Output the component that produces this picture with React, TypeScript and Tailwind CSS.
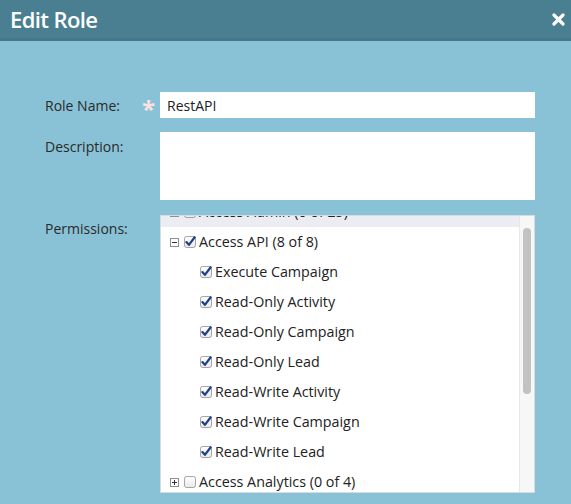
import React from "react";

const font = { fontFamily: '"Open Sans", "DejaVu Sans", sans-serif' };

function Checkbox({ checked }: { checked: boolean }) {
  return (
    <svg width="12" height="12" viewBox="0 0 13 13" className="shrink-0">
      <defs>
        <linearGradient id="cbg" x1="0" y1="0" x2="0" y2="1">
          <stop offset="0" stopColor="#ffffff" />
          <stop offset="1" stopColor="#e9e9e9" />
        </linearGradient>
      </defs>
      <rect x="0.5" y="0.5" width="12" height="12" rx="2.5" fill="url(#cbg)" stroke="#9a9a9a" />
      {checked && (
        <path
          d="M2.6 6.6 L5.3 9.6 L11.6 1.4"
          fill="none"
          stroke="#1f3f8a"
          strokeWidth="2.4"
          strokeLinecap="round"
          strokeLinejoin="round"
        />
      )}
    </svg>
  );
}

function Expander({ open }: { open: boolean }) {
  return (
    <svg width="9" height="9" viewBox="0 0 9 9" className="shrink-0">
      <rect x="0.5" y="0.5" width="8" height="8" fill="#fff" stroke="#8f8f8f" />
      <path d="M2 4.5 H7" stroke="#333" strokeWidth="1" />
      {!open && <path d="M4.5 2 V7" stroke="#333" strokeWidth="1" />}
    </svg>
  );
}

function GroupRow({ label, open, checked, shaded }: { label: string; open: boolean; checked: boolean; shaded?: boolean }) {
  return (
    <div className={`h-[30px] flex items-center pl-[9px] ${shaded ? "bg-[#ecedf3]" : ""}`}>
      <Expander open={open} />
      <span className="w-[5px]" />
      <Checkbox checked={checked} />
      <span className="ml-[3px] text-[14.3px] text-[#222]">{label}</span>
    </div>
  );
}

function ChildRow({ label }: { label: string }) {
  return (
    <div className="h-[30px] flex items-center pl-[39px]">
      <Checkbox checked />
      <span className="ml-[3px] text-[14.3px] text-[#222]">{label}</span>
    </div>
  );
}

const children = [
  "Execute Campaign",
  "Read-Only Activity",
  "Read-Only Campaign",
  "Read-Only Lead",
  "Read-Write Activity",
  "Read-Write Campaign",
  "Read-Write Lead",
];

export default function App() {
  return (
    <div className="w-[571px] h-[504px] bg-[#89c2d6] overflow-hidden" style={font}>
      {/* Header */}
      <div className="h-[41px] bg-[#4a7f92] border-b-[3px] border-[#447789] flex items-center justify-between pl-[10px] pr-[6px]">
        <span className="text-white text-[22px] font-semibold tracking-[-0.6px] leading-none">Edit Role</span>
        <svg width="13" height="13" viewBox="0 0 13 13">
          <path d="M2 2 L11 11 M11 2 L2 11" stroke="#fff" strokeWidth="3.2" strokeLinecap="round" />
        </svg>
      </div>

      {/* Form */}
      <div className="pt-[51px] flex flex-col">
        <div className="flex items-center h-[26px]">
          <span className="w-[97px] ml-[45px] text-[14px] text-[#2a2a2a]">Role Name:</span>
          <span className="w-[18px] text-[24px] leading-none text-[#fbe2e2] font-bold pt-[8px] text-left">*</span>
          <div className="w-[375px] h-[26px] bg-white flex items-center pl-[7px] text-[14px] text-[#222]">RestAPI</div>
        </div>

        <div className="flex mt-[14px] h-[68px]">
          <span className="w-[97px] ml-[45px] pt-[4px] text-[14px] text-[#2a2a2a]">Description:</span>
          <span className="w-[18px]" />
          <div className="w-[375px] h-[68px] bg-white" />
        </div>

        <div className="flex mt-[15px]">
          <span className="w-[97px] ml-[45px] pt-[3px] text-[14px] text-[#2a2a2a]">Permissions:</span>
          <span className="w-[18px]" />
          <div className="w-[375px] h-[278px] bg-white border border-[#d6dde0] flex overflow-hidden">
            <div className="flex-1 overflow-hidden">
              <div className="-mt-[19px]">
                <GroupRow label="Access Admin (0 of 25)" open checked={false} shaded />
                <GroupRow label="Access API (8 of 8)" open checked />
                {children.map((c) => (
                  <ChildRow key={c} label={c} />
                ))}
                <GroupRow label="Access Analytics (0 of 4)" open={false} checked={false} />
              </div>
            </div>
            <div className="w-[15px] bg-[#f7f7f7] border-l border-[#e8e8e8] flex justify-center pt-[12px]">
              <div className="w-[8px] h-[166px] rounded-full bg-[#c2c2c2]" />
            </div>
          </div>
        </div>
      </div>
    </div>
  );
}
